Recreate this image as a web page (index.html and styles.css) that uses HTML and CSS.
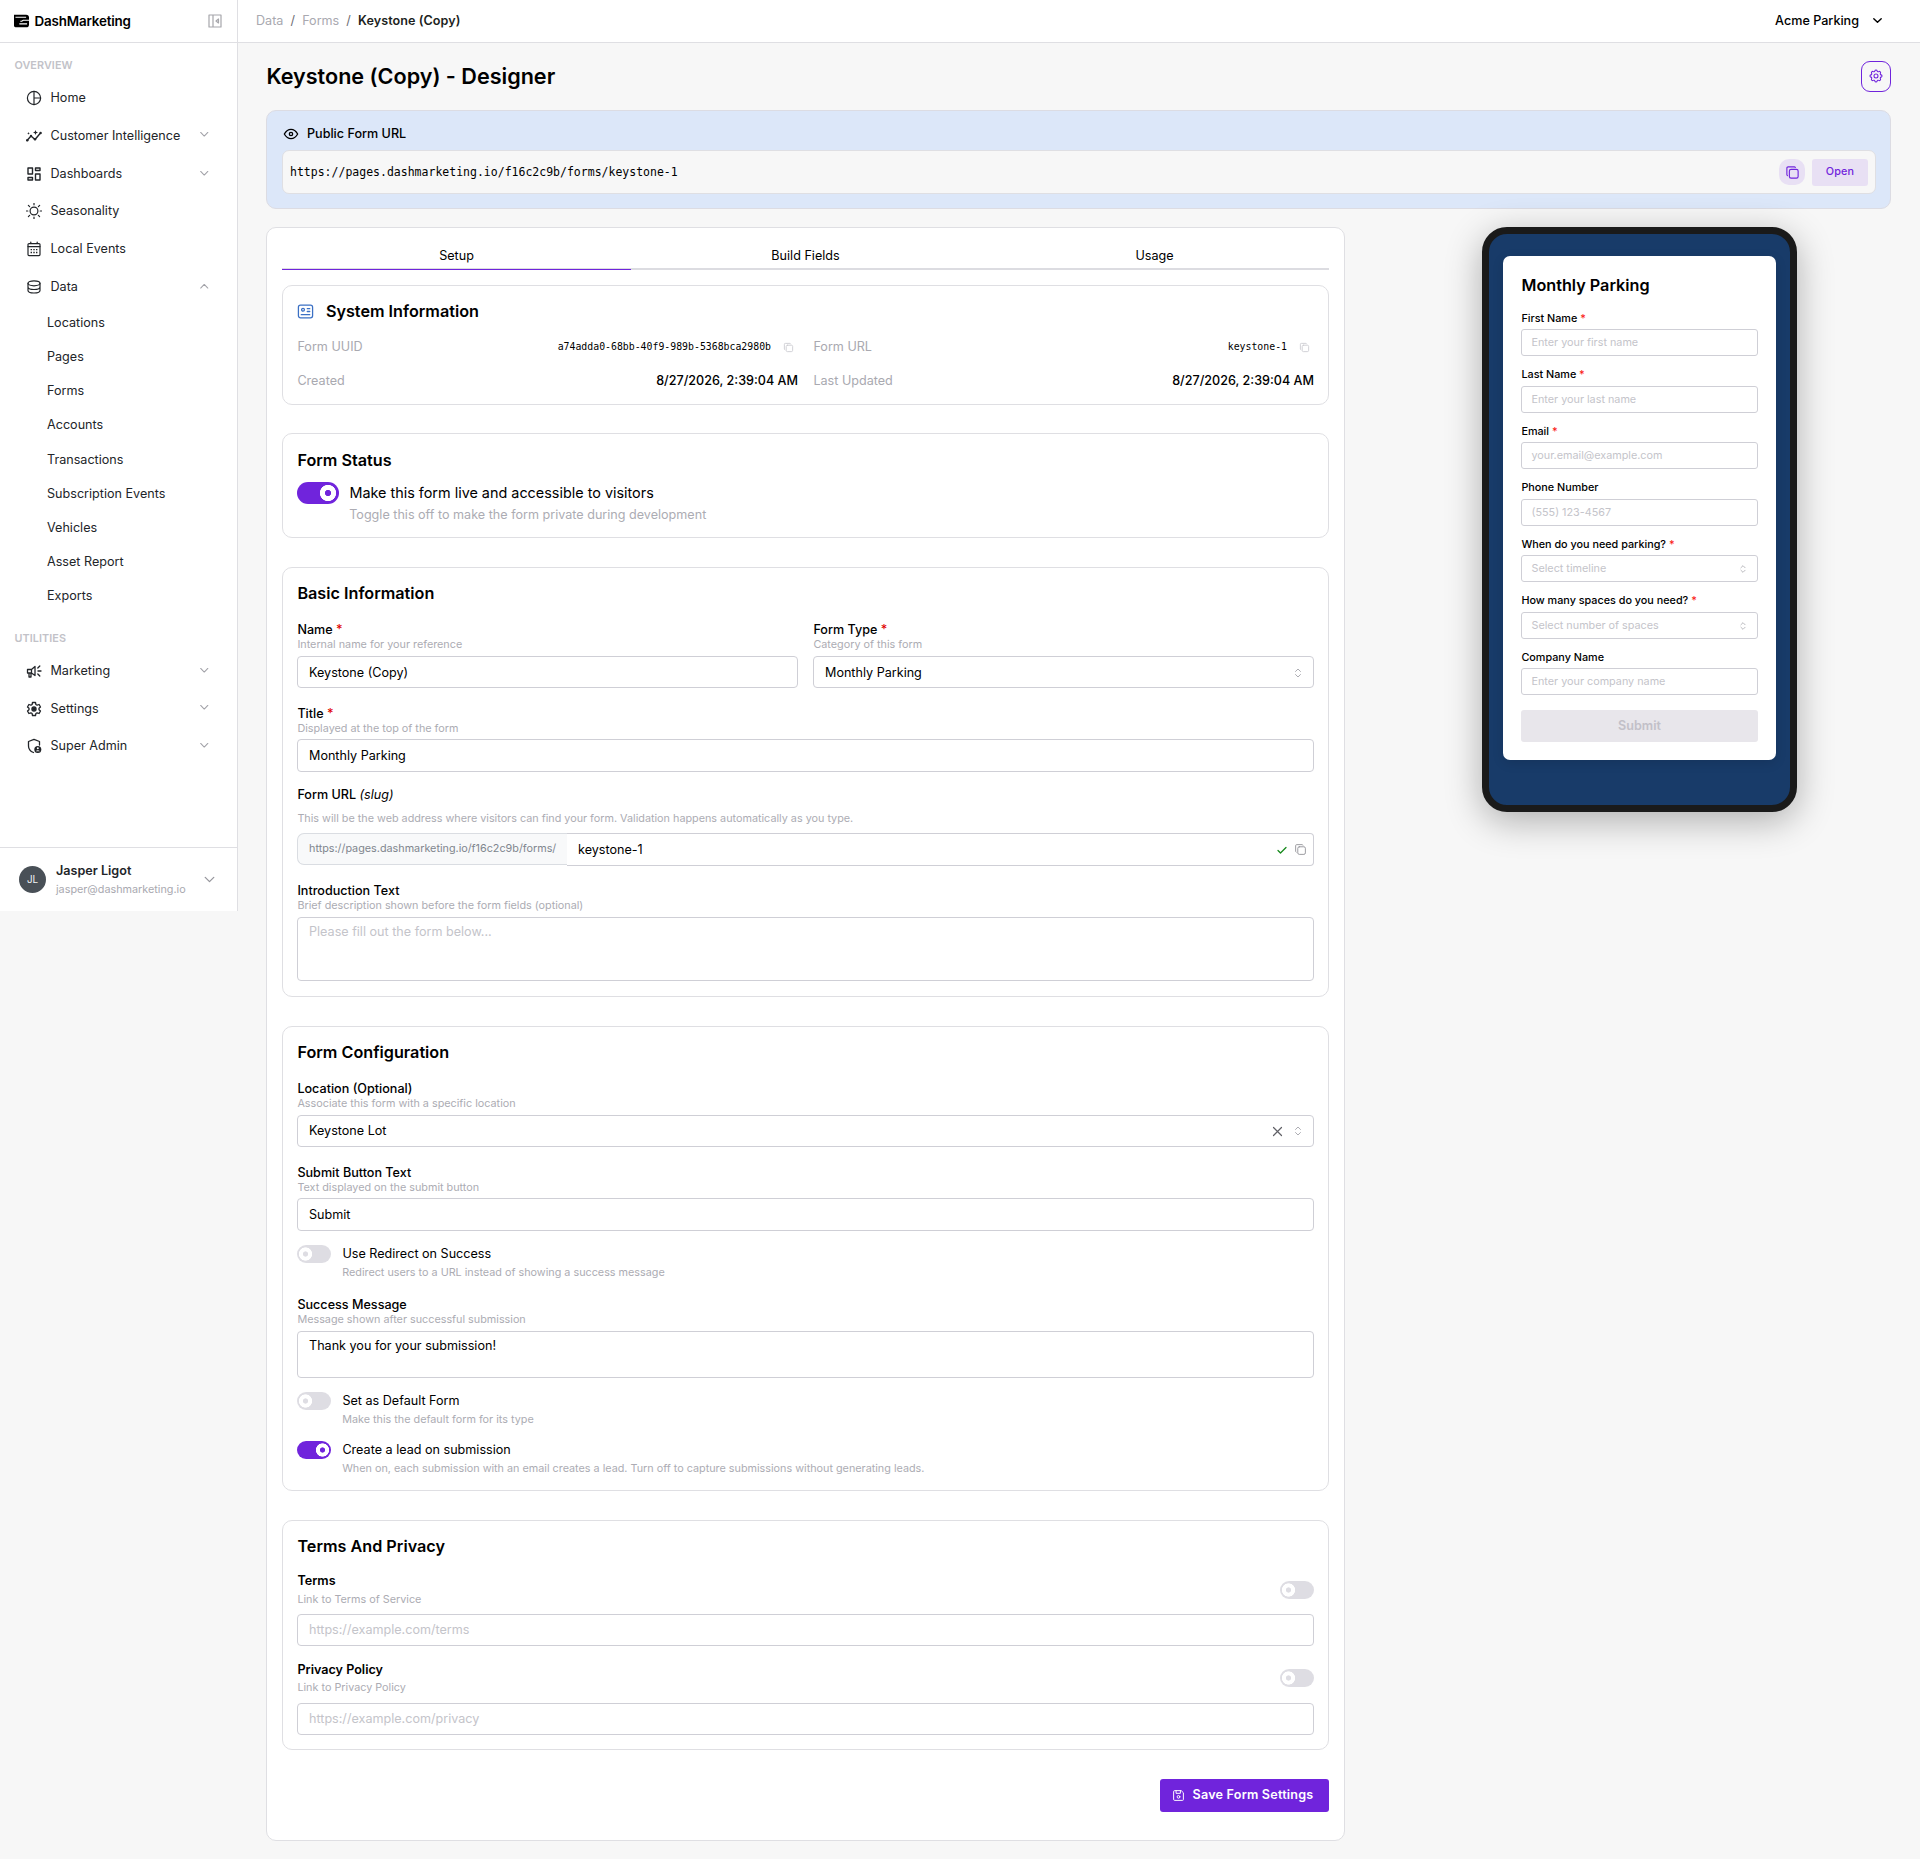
FILE: index.html
```html
<!DOCTYPE html>
<html lang="en">
<head>
<meta charset="utf-8">
<title>Keystone (Copy) - Designer</title>
<link rel="stylesheet" href="styles.css">
</head>
<body>
<svg width="0" height="0" class="defs">
  <defs>
    <symbol id="chevron" viewBox="0 0 14 14"><path d="M3 5l4 4 4-4"/></symbol>
    <symbol id="copy" viewBox="0 0 24 24"><rect x="7" y="7" width="14" height="14" rx="2.7"/><path d="M4 17a2 2 0 0 1-1-1.7V5a2 2 0 0 1 2-2h10c.8 0 1.200.4 1.500 1"/></symbol>
    <symbol id="selector" viewBox="0 0 24 24"><path d="M7 9l5-5 5 5M7 15l5 5 5-5"/></symbol>
  </defs>
</svg>
<div class="app">
  <aside class="sidebar">
    <div class="brand">
      <svg class="brand-mark" viewBox="0 0 16 14"><path fill="#000" d="M0 .5h12.500A3 3 0 0 1 15.500 3.500v7A3 3 0 0 1 12.500 13.500H1.500A1.500 1.500 0 0 1 0 12z"/><path fill="none" stroke="#fff" stroke-width="1.100" d="M1.500 3.200h11M15.500 6.200H9.500L8 7.200H6.500M13.500 10H5.500"/></svg>
      <span class="brand-name">DashMarketing</span>
      <svg class="icon collapse" viewBox="0 0 14 14"><path d="M1 1h12v12H1zM5 1v12M10.500 5v4L8 7z"/></svg>
    </div>
    <nav class="nav">
      <div class="nav-title">OVERVIEW</div>
      <a class="nav-item"><svg class="icon" viewBox="0 0 16 16"><circle cx="8" cy="8" r="6.600"/><path d="M8 1.400v13.200M8 8h6.600"/></svg>Home</a>
      <a class="nav-item"><svg class="icon" viewBox="0 0 16 16"><path stroke-width="1.400" d="M1 12.500l4-4.500 4 3.500L14.500 5"/><g fill="currentColor" stroke="none"><circle cx="1.300" cy="12.300" r="1.200"/><circle cx="5" cy="8" r="1.200"/><circle cx="9" cy="11.300" r="1.200"/><circle cx="14.600" cy="5" r="1.200"/><path d="M9.500 2l.7 1.800 1.800.7-1.800.7-.7 1.800-.7-1.800-1.800-.7 1.800-.7zM2.500 4l.4 1 1 .4-1 .4-.4 1-.4-1-1-.4 1-.4z"/></g></svg>Customer Intelligence<svg class="icon chev"><use href="#chevron"/></svg></a>
      <a class="nav-item low"><svg class="icon" viewBox="0 0 16 16"><path stroke-width="1.400" d="M2 2h4.500v6H2zM9.500 2H14v2.500H9.500zM2 11.500h4.500V14H2zM9.500 8H14v6H9.500z"/></svg>Dashboards<svg class="icon chev"><use href="#chevron"/></svg></a>
      <a class="nav-item"><svg class="icon" viewBox="0 0 16 16"><circle cx="8" cy="8" r="3.900"/><path d="M8 0v1.800M8 14.200V16M0 8h1.800M14.200 8H16M2.400 2.400l1.200 1.200M12.400 12.400l1.200 1.200M2.400 13.600l1.200-1.200M12.400 3.600l1.200-1.200"/></svg>Seasonality</a>
      <a class="nav-item"><svg class="icon" viewBox="0 0 16 16"><rect x="2" y="2.600" width="12" height="12" rx="1"/><path d="M2 5.600h12M4.800 1v1.500M11.200 1v1.500"/><path stroke-linecap="butt" stroke-width="1.300" stroke-dasharray="1.400 1.300" d="M4.600 8.600h7M4.600 11.500h7"/></svg>Local Events</a>
      <a class="nav-item"><svg class="icon" viewBox="0 0 16 16"><ellipse cx="8" cy="4.300" rx="6" ry="2.500"/><path d="M2 4.300V8c0 1.400 2.700 2.500 6 2.500s6-1.100 6-2.500V4.300M2 8v3.500C2 13 4.700 14 8 14s6-1 6-2.500V8"/></svg>Data<svg class="icon chev up"><use href="#chevron"/></svg></a>
      <div class="subnav">
        <a>Locations</a><a>Pages</a><a>Forms</a><a>Accounts</a><a>Transactions</a><a>Subscription Events</a><a>Vehicles</a><a>Asset Report</a><a>Exports</a>
      </div>
      <div class="nav-title second">UTILITIES</div>
      <a class="nav-item"><svg class="icon" viewBox="0 0 16 16"><path stroke-width="1.300" d="M9 3.500v9L5.500 10H1.500V6.500h4zM3 10v4h2v-4M12 8h3M11.800 5l2-2M11.800 11l2 2M5.500 6.500V10"/></svg>Marketing<svg class="icon chev"><use href="#chevron"/></svg></a>
      <a class="nav-item"><svg class="icon" viewBox="0 0 16 16"><path stroke-width="1.300" d="M6.500 1.500h3l.4 2 1.200.7 2-.7 1.400 2.500-1.500 1.300v1.400l1.500 1.300-1.400 2.500-2-.7-1.200.7-.4 2h-3l-.4-2-1.200-.7-2 .7L1.500 10 3 8.700V7.300L1.500 6l1.400-2.500 2 .7 1.200-.7z"/><circle cx="8" cy="8" r="2.100" fill="currentColor"/></svg>Settings<svg class="icon chev"><use href="#chevron"/></svg></a>
      <a class="nav-item"><svg class="icon" viewBox="0 0 16 16"><path stroke-width="1.300" d="M13.500 7V3.500L8 1.300 2.500 3.500V8c0 3 2 5.400 5 6.500"/><circle cx="11.800" cy="11.500" r="3.500" fill="currentColor" stroke="none"/><circle cx="11.800" cy="10.300" r="1" fill="#fff" stroke="none"/><path fill="#fff" stroke="none" d="M9.800 13.300c.8-1.400 3.200-1.400 4 0z"/></svg>Super Admin<svg class="icon chev"><use href="#chevron"/></svg></a>
    </nav>
    <div class="user">
      <div class="avatar">JL</div>
      <div class="user-text"><div class="user-name">Jasper Ligot</div><div class="user-mail">jasper@dashmarketing.io</div></div>
      <svg class="icon user-chev"><use href="#chevron"/></svg>
    </div>
  </aside>

  <div class="page">
    <header class="topbar">
      <div class="crumbs"><span>Data</span><i>/</i><span>Forms</span><i>/</i><b>Keystone (Copy)</b></div>
      <div class="account">Acme Parking<svg class="icon"><use href="#chevron"/></svg></div>
    </header>
    <main class="content">
      <div class="title-row">
        <h1>Keystone (Copy) - Designer</h1>
        <button class="gear"><svg class="icon" viewBox="0 0 24 24"><path d="M10.325 4.317c.426-1.756 2.924-1.756 3.350 0a1.724 1.724 0 0 0 2.573 1.066c1.543-.94 3.310.826 2.370 2.370a1.724 1.724 0 0 0 1.065 2.572c1.756.426 1.756 2.924 0 3.350a1.724 1.724 0 0 0-1.066 2.573c.94 1.543-.826 3.310-2.370 2.370a1.724 1.724 0 0 0-2.572 1.065c-.426 1.756-2.924 1.756-3.350 0a1.724 1.724 0 0 0-2.573-1.066c-1.543.94-3.310-.826-2.370-2.370a1.724 1.724 0 0 0-1.065-2.572c-1.756-.426-1.756-2.924 0-3.350a1.724 1.724 0 0 0 1.066-2.573c-.94-1.543.826-3.310 2.370-2.370 1 .608 2.296.07 2.572-1.065z"/><circle cx="12" cy="12" r="3"/></svg></button>
      </div>
      <section class="public">
        <div class="public-head"><svg class="icon" viewBox="0 0 24 24"><circle cx="12" cy="12" r="2.500"/><path d="M22 12c-2.700 4.700-6 7-10 7s-7.300-2.300-10-7c2.700-4.700 6-7 10-7s7.300 2.300 10 7"/></svg>Public Form URL</div>
        <div class="public-url">
          <code>https://pages.dashmarketing.io/f16c2c9b/forms/keystone-1</code>
          <button class="copy-btn"><svg class="icon"><use href="#copy"/></svg></button>
          <button class="open-btn">Open</button>
        </div>
      </section>

      <div class="columns">
        <section class="panel">
          <div class="tabs"><div class="tab active">Setup</div><div class="tab">Build Fields</div><div class="tab">Usage</div></div>

          <section class="card system">
            <h2><svg class="icon" viewBox="0 0 24 24"><rect x="2" y="3" width="20" height="18" rx="3"/><circle cx="8.500" cy="9.500" r="2"/><path d="M14.500 8H18M14.500 12H18M6 16.500h12"/></svg>System Information</h2>
            <div class="info">
              <div class="info-row"><span>Form UUID</span><code>a74adda0-68bb-40f9-989b-5368bca2980b</code><svg class="icon"><use href="#copy"/></svg></div>
              <div class="info-row"><span>Form URL</span><code>keystone-1</code><svg class="icon"><use href="#copy"/></svg></div>
              <div class="info-row"><span>Created</span><b>8/27/2026, 2:39:04 AM</b></div>
              <div class="info-row"><span>Last Updated</span><b>8/27/2026, 2:39:04 AM</b></div>
            </div>
          </section>

          <section class="card status">
            <h2>Form Status</h2>
            <div class="switch-row large"><div class="switch on"></div><div><div class="switch-label">Make this form live and accessible to visitors</div><div class="switch-desc">Toggle this off to make the form private during development</div></div></div>
          </section>

          <section class="card basic">
            <h2>Basic Information</h2>
            <div class="pair">
              <div class="field"><label>Name <em>*</em></label><div class="desc">Internal name for your reference</div><div class="input low">Keystone (Copy)</div></div>
              <div class="field"><label>Form Type <em>*</em></label><div class="desc">Category of this form</div><div class="input low">Monthly Parking<svg class="icon selector"><use href="#selector"/></svg></div></div>
            </div>
            <div class="field tall"><label>Title <em>*</em></label><div class="desc">Displayed at the top of the form</div><div class="input">Monthly Parking</div></div>
            <div class="slug">
              <label>Form URL <i>(slug)</i></label>
              <div class="desc">This will be the web address where visitors can find your form. Validation happens automatically as you type.</div>
              <div class="slug-row"><div class="prefix">https://pages.dashmarketing.io/f16c2c9b/forms/</div><div class="slug-input">keystone-1<svg class="icon check" viewBox="0 0 24 24"><path d="M4 13l5 5L20 7"/></svg><svg class="icon slug-copy"><use href="#copy"/></svg></div></div>
            </div>
            <div class="field"><label>Introduction Text</label><div class="desc">Brief description shown before the form fields (optional)</div><div class="input area intro">Please fill out the form below...</div></div>
          </section>

          <section class="card">
            <h2>Form Configuration</h2>
            <div class="field"><label>Location (Optional)</label><div class="desc">Associate this form with a specific location</div><div class="input">Keystone Lot<svg class="icon clear" viewBox="0 0 15 15"><path d="M3.500 3.500l8 8M11.500 3.500l-8 8"/></svg><svg class="icon selector"><use href="#selector"/></svg></div></div>
            <div class="field tall"><label>Submit Button Text</label><div class="desc">Text displayed on the submit button</div><div class="input">Submit</div></div>
            <div class="switch-row"><div class="switch"></div><div><div class="switch-label">Use Redirect on Success</div><div class="switch-desc">Redirect users to a URL instead of showing a success message</div></div></div>
            <div class="field message"><label>Success Message</label><div class="desc">Message shown after successful submission</div><div class="input area">Thank you for your submission!</div></div>
            <div class="switch-row"><div class="switch"></div><div><div class="switch-label">Set as Default Form</div><div class="switch-desc">Make this the default form for its type</div></div></div>
            <div class="switch-row last"><div class="switch on"></div><div><div class="switch-label">Create a lead on submission</div><div class="switch-desc">When on, each submission with an email creates a lead. Turn off to capture submissions without generating leads.</div></div></div>
          </section>

          <section class="card terms">
            <h2>Terms And Privacy</h2>
            <div class="link-row"><div><label>Terms</label><div class="desc">Link to Terms of Service</div></div><div class="switch"></div></div>
            <div class="input placeholder">https://example.com/terms</div>
            <div class="link-row second"><div><label>Privacy Policy</label><div class="desc">Link to Privacy Policy</div></div><div class="switch"></div></div>
            <div class="input placeholder">https://example.com/privacy</div>
          </section>

          <div class="actions"><button class="save"><svg class="icon" viewBox="0 0 24 24"><path d="M3 4.500A1.500 1.500 0 0 1 4.500 3H17l4 4v12.500a1.500 1.500 0 0 1-1.500 1.500h-15A1.500 1.500 0 0 1 3 19.500zM7.500 3v5h8V3"/><circle cx="12" cy="14.500" r="2.500"/></svg>Save Form Settings</button></div>
        </section>

        <aside class="preview">
          <div class="phone">
            <div class="phone-card">
              <h3>Monthly Parking</h3>
              <div class="pf"><label>First Name <em>*</em></label><div class="pi">Enter your first name</div></div>
              <div class="pf"><label>Last Name <em>*</em></label><div class="pi">Enter your last name</div></div>
              <div class="pf"><label>Email <em>*</em></label><div class="pi">your.email@example.com</div></div>
              <div class="pf"><label>Phone Number</label><div class="pi">(555) 123-4567</div></div>
              <div class="pf"><label>When do you need parking? <em>*</em></label><div class="pi">Select timeline<svg class="icon selector"><use href="#selector"/></svg></div></div>
              <div class="pf"><label>How many spaces do you need? <em>*</em></label><div class="pi">Select number of spaces<svg class="icon selector"><use href="#selector"/></svg></div></div>
              <div class="pf"><label>Company Name</label><div class="pi">Enter your company name</div></div>
              <button class="phone-submit">Submit</button>
            </div>
          </div>
        </aside>
      </div>
    </main>
  </div>
</div>
</body>
</html>
```

FILE: styles.css
```css
* { box-sizing: border-box; }
body {
  margin: 0;
  background: #f7f7f7;
  color: #000;
  font: 12.6px/16px Inter, "Liberation Sans", sans-serif;
}
h1, h2, h3 { margin: 0; font-weight: 600; }
button { margin: 0; padding: 0; border: 0; font-family: inherit; }
code { font-family: "DejaVu Sans Mono", monospace; }
label { display: block; font-weight: 500; height: 16px; padding-left: .4px; }
em { color: #e00000; font-style: normal; }
.defs { position: absolute; }
.icon { fill: none; stroke: currentColor; stroke-width: 1.2; stroke-linecap: round; stroke-linejoin: round; flex: none; }

.app { display: flex; align-items: flex-start; min-height: 1859px; }

/* Sidebar */
.sidebar { width: 238px; height: 911px; flex: none; display: flex; flex-direction: column; background: #fff; border-right: 1px solid #dfdfe3; color: #222529; }
.brand { height: 43px; flex: none; display: flex; align-items: center; padding: 0 15px 1px 14px; border-bottom: 1px solid #dfdfe3; color: #000; }
.brand-mark { width: 15.500px; height: 14px; margin-right: 5px; }
.brand-name { font-size: 13.400px; font-weight: 600; letter-spacing: -.17px; }
.collapse { width: 14px; height: 14px; margin-left: auto; color: #a6a6ab; }
.nav { flex: 1; padding-top: 15px; }
.nav-title { padding-left: 14.400px; height: 16px; margin-bottom: 5px; font-size: 10.800px; font-weight: 600; color: #c2c2c8; letter-spacing: .1px; }
.nav-title.second { margin: 17.400px 0 5px; }
.nav-item { display: flex; align-items: center; height: 37.800px; padding: 0 26px; }
.nav-item.low { padding-top: 1px; }
.nav-item > .icon:first-child { width: 16px; height: 16px; margin-right: 8.200px; margin-left: .3px; }
.chev { width: 12.500px; height: 12.500px; margin: -2px 1px 0 auto; color: #a2a2a8; }
.chev.up { transform: rotate(180deg); }
.subnav { display: flex; flex-direction: column; padding-left: 47px; }
.subnav a { height: 34.200px; line-height: 34.200px; }
.user { height: 64px; flex: none; display: flex; align-items: center; padding: 0 20px 0 19px; border-top: 1px solid #dfdfe3; }
.avatar { width: 27px; height: 27px; border-radius: 50%; background: #495057; color: #f1f3f5; text-align: center; font-size: 9.800px; line-height: 27px; }
.user-text { margin-left: 10px; }
.user-name { font-weight: 600; height: 18px; line-height: 18px; }
.user-mail { font-size: 10.800px; height: 18px; line-height: 19px; color: #a9a9b0; }
.user-chev { width: 15px; height: 15px; margin: -1px 0 0 auto; color: #96969c; }

/* Top bar */
.page { flex: 1; min-width: 0; }
.topbar { height: 43px; display: flex; align-items: center; justify-content: space-between; padding: 0 36px 1px 18px; background: #fff; border-bottom: 1px solid #dfdfe3; }
.crumbs { color: #a9a9b0; }
.crumbs i { margin: 0 7.100px; color: #6c6c72; font-style: normal; }
.crumbs b { color: #1d1f22; font-weight: 600; letter-spacing: .06px; }
.account { display: flex; align-items: center; font-weight: 500; }
.account .icon { width: 13px; height: 13px; margin: 0 .5px 0 11.500px; stroke-width: 1.500; }
.content { padding: 18px 29px 18px 28px; }
.title-row { display: flex; justify-content: space-between; align-items: center; height: 31px; margin-bottom: 18px; }
.title-row h1 { font-size: 21.600px; line-height: 31px; font-weight: 600; letter-spacing: -.01px; padding-left: .4px; }
.gear { width: 30px; height: 31px; display: grid; place-items: center; border: 1px solid #7024dc; border-radius: 9px; background: none; color: #7024dc; }
.gear .icon { width: 16px; height: 16px; margin-top: -1px; stroke-width: 1.600; }

/* Public URL */
.public { height: 99px; padding: 13px 14px 14px 15px; border: 1px solid #dcdce3; border-radius: 10px; background: #dce7f9; }
.public-head { display: flex; align-items: center; height: 20px; margin: 0 0 6px 1px; gap: 8px; font-weight: 500; }
.public-head .icon { width: 16px; height: 16px; stroke-width: 2; }
.public-url { display: flex; align-items: center; height: 44px; padding: 0 7px; border: 1px solid #dfdfe3; border-radius: 7px; background: #f7f7f7; }
.public-url code { font-size: 11.510px; margin-right: auto; }
.copy-btn { width: 26px; height: 26px; display: grid; place-items: center; border-radius: 10px; background: #e8e0f4; color: #7024dc; margin-right: 7px; }
.copy-btn .icon { width: 15px; height: 15px; stroke-width: 1.800; }
.open-btn { width: 56px; height: 27px; padding-bottom: 1px; border-radius: 3px; background: #e8e0f4; color: #7024dc; font-size: 10.800px; font-weight: 500; letter-spacing: .15px; }

/* Columns */
.columns { display: flex; align-items: flex-start; margin-top: 18px; }
.panel { width: 1079px; height: 1614px; padding: 14px 15px; border: 1px solid #dfdfe3; border-radius: 10px; background: #fff; }
.tabs { display: flex; height: 28px; box-shadow: inset 0 -2px #dcdce1; }
.tab { flex: 1; height: 28px; line-height: 27px; text-align: center; border-bottom: 1px solid #dcdce1; }
.tab.active { border-bottom-color: #7024dc; }
.card { padding: 14px; border: 1px solid #dfdfe3; border-radius: 10px; margin: 0 0 29px; }
.card h2 { display: flex; align-items: center; height: 22px; font-size: 16.200px; line-height: 22px; margin-bottom: 17px; padding-left: .4px; font-weight: 600; }
.system { height: 120px; margin: 15px 0 28px; }
.system h2 { margin-bottom: 8px; }
.system h2 .icon { width: 17px; height: 17px; margin-right: 11.500px; color: #3b70c4; stroke-width: 1.800; }
.info { display: grid; grid-template-columns: 1fr 1fr; column-gap: 15px; }
.info-row { display: flex; align-items: center; height: 33.400px; padding-top: 1px; color: #a9a9b0; }
.info-row span { margin-right: auto; padding-left: .4px; }
.info-row code { color: #000; font-size: 9.860px; }
.info-row b { color: #000; font-weight: 500; }
.info-row .icon { width: 11px; height: 11px; margin: 0 4px 0 12px; color: #cdcdd2; stroke-width: 2; }
.status { height: 105px; }
.status h2 { margin: 1px 0 11px; }
.basic { padding-bottom: 15px; }

/* Fields */
.pair { display: grid; grid-template-columns: 1fr 1fr; gap: 15px; }
.card > .field + .field, .pair + .field { margin-top: 17px; }
.field label, .field .desc, .slug .desc { padding-top: 1px; }
.desc { height: 14px; padding-left: .4px; font-size: 10.800px; line-height: 14px; color: #acacb3; }
.input { display: flex; align-items: center; height: 32px; padding: 0 11px; margin-top: 5px; border: 1px solid #cfcfd6; border-radius: 4px; background: #fff; }
.input.low { padding-top: 1px; }
.tall .input { height: 33px; margin-top: 4px; }
.selector { width: 12px; height: 12px; margin: 0 -2px 0 auto; color: #a4a4aa; stroke-width: 1.800; }
.clear { width: 15px; height: 15px; margin-left: auto; color: #606066; }
.clear + .selector { margin-left: 7px; }
.input.area { align-items: flex-start; padding-top: 6px; }
.intro { height: 64px; color: #c4c4ca; }
.placeholder { color: #c4c4ca; }
.slug { margin: 14px 0 16px; }
.slug label { height: 17px; line-height: 18px; }
.slug label i { font-weight: 400; }
.slug .desc { margin: 8px 0; }
.slug-row { display: flex; align-items: flex-start; height: 33px; }
.prefix { width: 270px; height: 32px; padding-left: 11px; border: 1px solid #dadde2; border-right: 0; border-radius: 7px 0 0 7px; background: #f8f9fa; color: #80868e; font-size: 10.800px; line-height: 30px; }
.slug-input { flex: 1; display: flex; align-items: center; height: 33px; padding: 0 6px 0 11px; border: 1px solid #cfcfd6; border-left: 0; border-radius: 0 4px 4px 0; }
.check { width: 12px; height: 12px; margin-left: auto; color: #168a1c; stroke-width: 2.500; }
.slug-copy { width: 13px; height: 13px; margin-left: 6px; color: #94949a; stroke-width: 1.700; }

/* Switches */
.switch-row { display: flex; gap: 11px; margin-top: 14px; height: 34px; }
.switch-row.last { margin-top: 15px; height: 35px; }
.switch { width: 34px; height: 18px; flex: none; border-radius: 9px; background: radial-gradient(circle at 8.500px 9px, #dedde3 2.300px, #fff 2.900px, #fff 6.300px, #dedde3 6.900px); }
.switch.on { background: radial-gradient(circle at 25.500px 9px, #7024dc 2.300px, #fff 2.900px, #fff 6.300px, #7024dc 6.900px); }
.switch-label { height: 18px; line-height: 17px; padding-left: .4px; }
.switch-desc { margin-top: 3px; height: 14px; line-height: 14px; padding-left: .2px; font-size: 10.800px; color: #acacb3; }
.switch-row.large { margin: 0; gap: 10px; }
.large .switch { width: 42px; height: 22px; border-radius: 11px; background: radial-gradient(circle at 31px 11px, #7024dc 2.800px, #fff 3.400px, #fff 7.800px, #7024dc 8.400px); }
.large .switch-label { height: 22px; line-height: 22px; font-size: 14.400px; }
.large .switch-desc { margin-top: 2px; height: 18px; line-height: 17px; font-size: 12.600px; }
.message { margin-top: 18px; }
.field.message label, .field.message .desc { padding-top: 0; }
.message .input { height: 47px; margin-top: 4px; }

/* Terms */
.terms h2 { margin-bottom: 15px; }
.link-row { display: flex; justify-content: space-between; align-items: center; height: 36px; }
.link-row > div:first-child { margin-top: -1px; }
.link-row.second { margin-top: 14px; }
.link-row label { font-weight: 600; }
.link-row .desc { margin-top: 4px; }
.link-row.second > div:first-child { margin-top: 0; }
.link-row.second .desc { margin-top: 3px; }
.terms .input { margin-top: 6px; }
.terms .link-row.second + .input { margin-top: 7px; }
.actions { display: flex; justify-content: flex-end; }
.save { width: 169px; height: 33px; display: flex; align-items: center; justify-content: center; gap: 7.500px; padding: 0 3.500px 2px 0; border-radius: 3px; background: #7024dc; color: #fff; font-size: 12.600px; font-weight: 600; letter-spacing: .2px; }
.save .icon { width: 13px; height: 13px; margin-top: 1px; stroke-width: 1.800; }

/* Phone preview */
.preview { flex: 1; padding-left: 43px; display: flex; justify-content: center; }
.phone { width: 315px; height: 585px; padding: 22px 14px; border: 7px solid #1a1a1a; border-radius: 25px; background: #183b69; box-shadow: 0 9px 36px rgba(0, 0, 0, .3); }
.phone-card { height: 504px; padding: 18px; border-radius: 7px; background: #fff; box-shadow: 0 3px 12px rgba(0, 0, 0, .12); }
.phone-card h3 { font-size: 16.200px; line-height: 22px; height: 22px; margin-bottom: 14px; padding-left: .5px; }
.pf { height: 56.500px; font-size: 10.800px; }
.pf label { padding-top: 1px; }
.pf:nth-of-type(even) label { padding-top: 0; }
.pf:nth-of-type(even) .pi { padding-top: 1px; }
.pf em { color: #fa1414; }
.pi { display: flex; align-items: center; height: 27px; margin-top: 3px; padding: 0 9px 0 9.500px; border: 1px solid #cfcfd6; border-radius: 3px; color: #c4c4ca; }
.pi .selector { width: 10px; height: 10px; margin-right: 0; }
.phone-submit { display: block; width: 100%; height: 32px; margin-top: 4px; border-radius: 3px; background: #e8e6eb; color: #c2c0c8; font-size: 12.600px; font-weight: 600; }
```
